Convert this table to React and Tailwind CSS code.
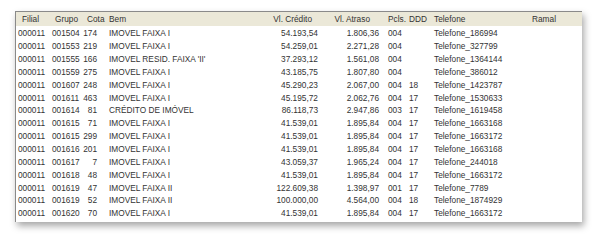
const rows = [
  ['000011', '001504', '174', 'IMOVEL FAIXA I', '54.193,54', '1.806,36', '004', '', 'Telefone_186994'],
  ['000011', '001553', '219', 'IMOVEL FAIXA I', '54.259,01', '2.271,28', '004', '', 'Telefone_327799'],
  ['000011', '001555', '166', "IMOVEL RESID. FAIXA 'II'", '37.293,12', '1.561,08', '004', '', 'Telefone_1364144'],
  ['000011', '001559', '275', 'IMOVEL FAIXA I', '43.185,75', '1.807,80', '004', '', 'Telefone_386012'],
  ['000011', '001607', '248', 'IMOVEL FAIXA I', '45.290,23', '2.067,00', '004', '18', 'Telefone_1423787'],
  ['000011', '001611', '463', 'IMOVEL FAIXA I', '45.195,72', '2.062,76', '004', '17', 'Telefone_1530633'],
  ['000011', '001614', '81', 'CRÉDITO DE IMÓVEL', '86.118,73', '2.947,86', '003', '17', 'Telefone_1619458'],
  ['000011', '001615', '71', 'IMOVEL FAIXA I', '41.539,01', '1.895,84', '004', '17', 'Telefone_1663168'],
  ['000011', '001615', '299', 'IMOVEL FAIXA I', '41.539,01', '1.895,84', '004', '17', 'Telefone_1663172'],
  ['000011', '001616', '201', 'IMOVEL FAIXA I', '41.539,01', '1.895,84', '004', '17', 'Telefone_1663168'],
  ['000011', '001617', '7', 'IMOVEL FAIXA I', '43.059,37', '1.965,24', '004', '17', 'Telefone_244018'],
  ['000011', '001618', '48', 'IMOVEL FAIXA I', '41.539,01', '1.895,84', '004', '17', 'Telefone_1663172'],
  ['000011', '001619', '47', 'IMOVEL FAIXA II', '122.609,38', '1.398,97', '001', '17', 'Telefone_7789'],
  ['000011', '001619', '52', 'IMOVEL FAIXA II', '100.000,00', '4.564,00', '004', '18', 'Telefone_1874929'],
  ['000011', '001620', '70', 'IMOVEL FAIXA I', '41.539,01', '1.895,84', '004', '17', 'Telefone_1663172'],
];

export default function App() {
  return (
    <div className="w-[597px] h-[243px] bg-white pt-[11px] pl-[15px] font-['Liberation_Sans',Arial,sans-serif] text-[8.3px] text-[#333] leading-none">
      <div className="w-[567px] h-[211px] bg-white border-l border-t border-[#8a8a8a] shadow-[2px_4px_7px_rgba(0,0,0,0.35)]">
        <div className="flex items-center h-[14px] bg-[#ebe8d8] whitespace-nowrap">
          <div className="w-[35px] pl-[6px]">Filial</div>
          <div className="w-[29px] pl-[4px]">Grupo</div>
          <div className="w-[20px] pl-[7px]">Cota</div>
          <div className="w-[140px] pl-[9px]">Bem</div>
          <div className="w-[81px] text-right pr-[9px]">Vl. Crédito</div>
          <div className="w-[61px] text-right pr-[12px]">Vl. Atraso</div>
          <div className="w-[23px] pl-[6px]">Pcls.</div>
          <div className="w-[25px] pl-[4px]">DDD</div>
          <div className="w-[95px] pl-[4px]">Telefone</div>
          <div className="pl-[7px]">Ramal</div>
        </div>
        <div className="pt-[1px]">
          {rows.map((r, i) => (
            <div key={i} className="flex items-center h-[12.86px] whitespace-nowrap">
              <div className="w-[35px] pl-[2px]">{r[0]}</div>
              <div className="w-[29px] pl-[1px]">{r[1]}</div>
              <div className="w-[20px] text-right pr-[3px]">{r[2]}</div>
              <div className="w-[140px] pl-[9px]">{r[3]}</div>
              <div className="w-[81px] text-right pr-[3px]">{r[4]}</div>
              <div className="w-[61px] text-right pr-[3px]">{r[5]}</div>
              <div className="w-[23px] pl-[6px]">{r[6]}</div>
              <div className="w-[25px] pl-[4px]">{r[7]}</div>
              <div className="w-[95px] pl-[4px]">{r[8]}</div>
              <div className="pl-[7px]" />
            </div>
          ))}
        </div>
      </div>
    </div>
  );
}
